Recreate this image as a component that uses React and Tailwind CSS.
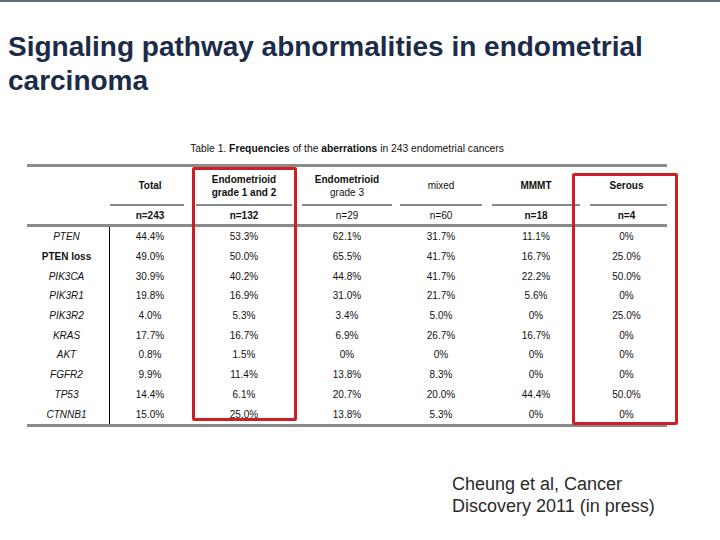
const rows = [
  ['PTEN', true, ['44.4%', '53.3%', '62.1%', '31.7%', '11.1%', '0%']],
  ['PTEN loss', false, ['49.0%', '50.0%', '65.5%', '41.7%', '16.7%', '25.0%']],
  ['PIK3CA', true, ['30.9%', '40.2%', '44.8%', '41.7%', '22.2%', '50.0%']],
  ['PIK3R1', true, ['19.8%', '16.9%', '31.0%', '21.7%', '5.6%', '0%']],
  ['PIK3R2', true, ['4.0%', '5.3%', '3.4%', '5.0%', '0%', '25.0%']],
  ['KRAS', true, ['17.7%', '16.7%', '6.9%', '26.7%', '16.7%', '0%']],
  ['AKT', true, ['0.8%', '1.5%', '0%', '0%', '0%', '0%']],
  ['FGFR2', true, ['9.9%', '11.4%', '13.8%', '8.3%', '0%', '0%']],
  ['TP53', true, ['14.4%', '6.1%', '20.7%', '20.0%', '44.4%', '50.0%']],
  ['CTNNB1', true, ['15.0%', '25.0%', '13.8%', '5.3%', '0%', '0%']],
];

const cols = 'grid grid-cols-[83px_80px_108px_98px_90px_100px_81px]';

export default function App() {
  return (
    <div className="relative w-[720px] h-[540px] bg-white overflow-hidden font-['Liberation_Sans',Arial,sans-serif]">
      <div className="h-[2px] bg-[#5c6e7c]" />

      <h1 className="mt-[28px] ml-[8px] text-[28px] leading-[34px] font-bold text-[#1b2b48]">
        Signaling pathway abnormalities in endometrial
        <br />
        carcinoma
      </h1>

      <div className="relative mt-[45px] ml-[27px] w-[640px] text-[#111]">
        <p className="text-center text-[10.3px] leading-[12px]">
          Table 1. <b>Frequencies</b> of the <b>aberrations</b> in 243 endometrial cancers
        </p>
        <div className="mt-[9px] h-[3px] bg-[#8a8a8a]" />

        {/* header */}
        <div className={`${cols} h-[37px] text-[10px] leading-[13px] items-center text-center`}>
          <div />
          <div className="font-bold">Total</div>
          <div className="font-bold">Endometrioid<br />grade 1 and 2</div>
          <div><span className="font-bold">Endometrioid</span><br />grade 3</div>
          <div>mixed</div>
          <div className="font-bold">MMMT</div>
          <div className="font-bold">Serous</div>
        </div>
        <div className={cols}>
          <div />
          <div className="h-[2px] bg-[#8a8a8a] mr-[6px]" />
          <div className="h-[2px] bg-[#8a8a8a] mx-[6px]" />
          <div className="h-[2px] bg-[#8a8a8a] mx-[4px]" />
          <div className="h-[2px] bg-[#8a8a8a] mx-[4px]" />
          <div className="h-[2px] bg-[#8a8a8a] mx-[6px]" />
          <div className="h-[2px] bg-[#8a8a8a] ml-[4px]" />
        </div>
        <div className={`${cols} h-[18px] text-[10px] items-center text-center`}>
          <div />
          <div className="font-bold">n=243</div>
          <div className="font-bold">n=132</div>
          <div>n=29</div>
          <div>n=60</div>
          <div className="font-bold">n=18</div>
          <div className="font-bold">n=4</div>
        </div>
        <div className="h-[3px] bg-[#8a8a8a]" />

        {rows.map(([name, italic, vals]) => (
          <div key={name} className={`${cols} h-[19.7px] text-[10px] items-center text-center`}>
            <div className={`h-full flex items-center justify-center border-r border-black pr-[3px] ${italic ? 'italic' : 'font-bold'}`}>
              {name}
            </div>
            {vals.map((v, i) => (
              <div key={i}>{v}</div>
            ))}
          </div>
        ))}
        <div className="h-[3px] bg-[#8a8a8a]" />

        {/* highlight boxes */}
        <div className="absolute left-[165px] top-[24px] w-[105px] h-[254px] border-[3px] border-[#cc2027] rounded-[2px]" />
        <div className="absolute left-[545px] top-[30px] w-[106px] h-[252px] border-[3px] border-[#cc2027] rounded-[2px]" />
      </div>

      <p className="absolute left-[452px] top-[473px] text-[18px] leading-[22px] text-[#2a2a2a]">
        Cheung et al, Cancer
        <br />
        Discovery 2011 (in press)
      </p>
    </div>
  );
}
